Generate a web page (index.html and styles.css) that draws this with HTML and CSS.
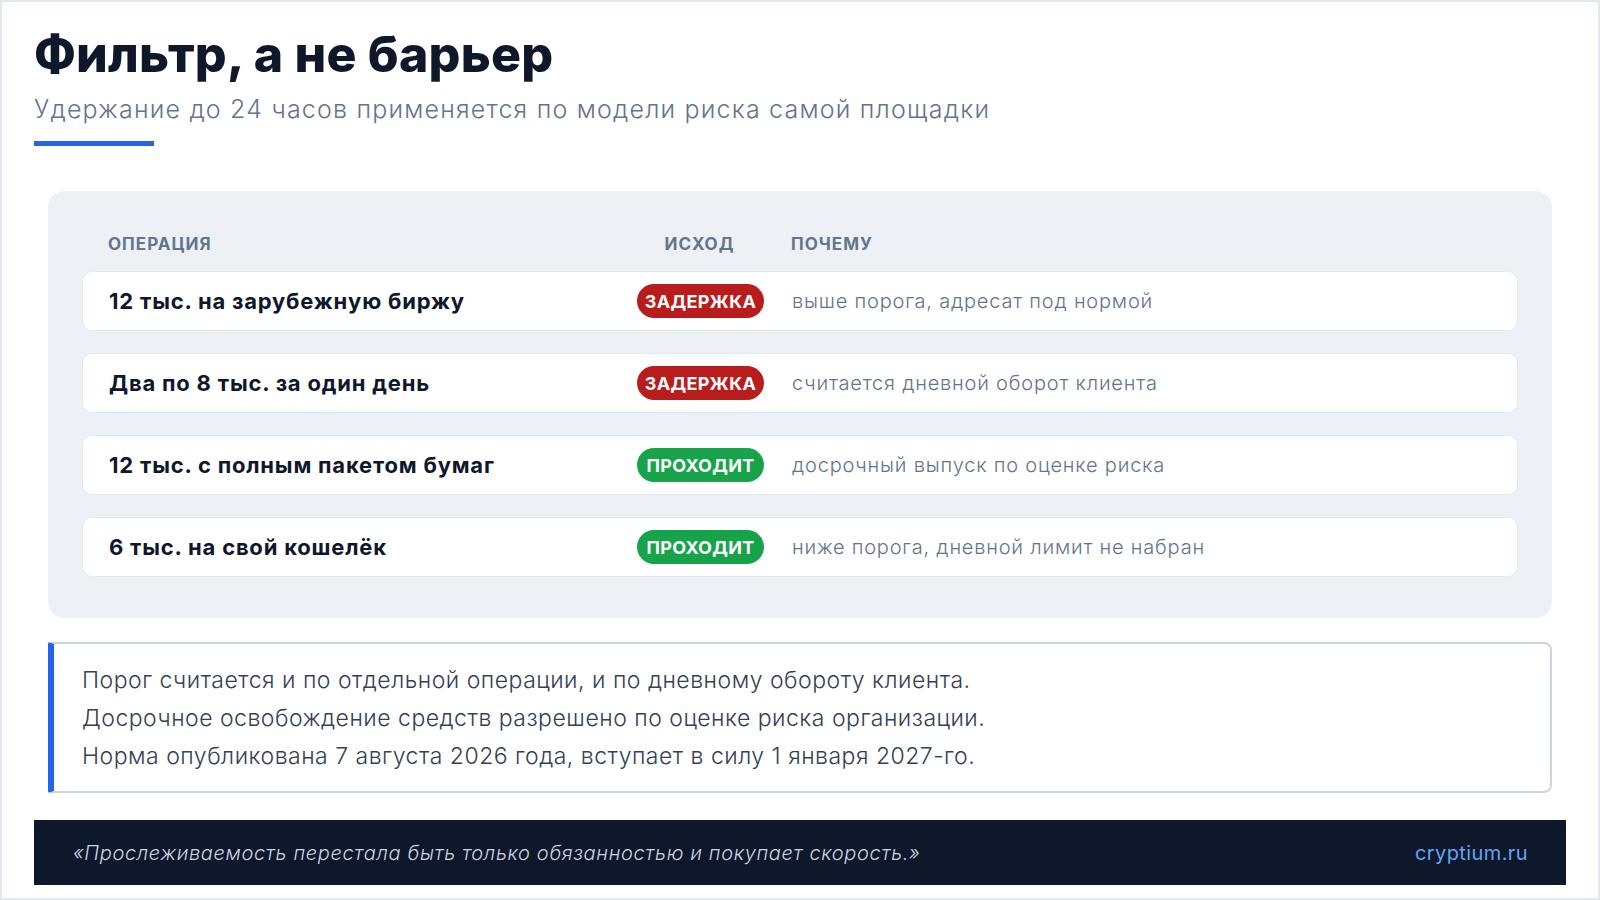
FILE: index.html
```html
<!DOCTYPE html>
<html lang="ru">
<head>
<meta charset="utf-8">
<title>Фильтр, а не барьер</title>
<link rel="stylesheet" href="styles.css">
</head>
<body>
<div class="page">
  <header class="head">
    <h1 class="title">Фильтр, а не барьер</h1>
    <p class="subtitle">Удержание до 24 часов применяется по модели риска самой площадки</p>
    <div class="accent"></div>
  </header>

  <section class="panel">
    <div class="grid thead">
      <div>Операция</div>
      <div class="c">Исход</div>
      <div>Почему</div>
    </div>
    <div class="grid row">
      <div class="op">12 тыс. на зарубежную биржу</div>
      <div class="c"><span class="badge hold">Задержка</span></div>
      <div class="why">выше порога, адресат под нормой</div>
    </div>
    <div class="grid row">
      <div class="op">Два по 8 тыс. за один день</div>
      <div class="c"><span class="badge hold">Задержка</span></div>
      <div class="why">считается дневной оборот клиента</div>
    </div>
    <div class="grid row">
      <div class="op">12 тыс. с полным пакетом бумаг</div>
      <div class="c"><span class="badge pass">Проходит</span></div>
      <div class="why">досрочный выпуск по оценке риска</div>
    </div>
    <div class="grid row">
      <div class="op">6 тыс. на свой кошелёк</div>
      <div class="c"><span class="badge pass">Проходит</span></div>
      <div class="why">ниже порога, дневной лимит не набран</div>
    </div>
  </section>

  <section class="note">
    <p>Порог считается и по отдельной операции, и по дневному обороту клиента.</p>
    <p>Досрочное освобождение средств разрешено по оценке риска организации.</p>
    <p>Норма опубликована 7 августа 2026 года, вступает в силу 1 января 2027-го.</p>
  </section>

  <footer class="foot">
    <span class="quote">«Прослеживаемость перестала быть только обязанностью и покупает скорость.»</span>
    <span class="site">cryptium.ru</span>
  </footer>
</div>
</body>
</html>
```

FILE: styles.css
```css
* { box-sizing: border-box; }
html, body { margin: 0; padding: 0; background: #ffffff; }
body {
  font-family: Inter, "Noto Sans", "Liberation Sans", sans-serif;
  color: #0f172a;
}
.page {
  width: 1600px;
  height: 900px;
  border: 2px solid #e2e8f0;
  padding: 22px 32px 0 32px;
  display: flex;
  flex-direction: column;
}
.head { display: flex; flex-direction: column; }
.title {
  margin: 0;
  font-size: 50px;
  line-height: 60px;
  font-weight: 800;
  color: #0f172a;
  letter-spacing: 0.2px;
}
.subtitle {
  margin: 9px 0 0 0;
  font-size: 25px;
  line-height: 32px;
  font-weight: 300;
  color: #64748b;
  letter-spacing: 1.2px;
}
.accent {
  width: 120px;
  height: 5px;
  background: #2563eb;
  margin-top: 16px;
}
.panel {
  margin: 45px 14px 0 14px;
  background: #edf1f6;
  border-radius: 16px;
  padding: 40px 34px 41px 34px;
  display: flex;
  flex-direction: column;
  gap: 22px;
}
.grid {
  display: grid;
  grid-template-columns: 500px 127px 1fr;
  column-gap: 28px;
  align-items: center;
  padding: 0 26px;
}
.c { text-align: center; }
.thead {
  height: 26px;
  margin-bottom: -8px;
  font-size: 17px;
  font-weight: 700;
  text-transform: uppercase;
  letter-spacing: 1px;
  color: #64748b;
}
.row {
  height: 60px;
  background: #ffffff;
  border: 1.5px solid #e2e8f0;
  border-radius: 10px;
}
.op {
  font-size: 22px;
  font-weight: 700;
  color: #0f172a;
  letter-spacing: 0.8px;
}
.badge {
  display: inline-flex;
  align-items: center;
  justify-content: center;
  width: 127px;
  height: 34px;
  border-radius: 17px;
  color: #ffffff;
  font-size: 18px;
  font-weight: 700;
  text-transform: uppercase;
  letter-spacing: 0.3px;
}
.hold { background: #b91c1c; }
.pass { background: #16a34a; }
.why {
  font-size: 20px;
  font-weight: 300;
  color: #64748b;
  letter-spacing: 0.8px;
}
.note {
  margin: 24px 14px 0 14px;
  border: 2px solid #cbd5e1;
  border-left: 6px solid #2563eb;
  border-radius: 2px 8px 8px 2px;
  padding: 17px 30px 16px 28px;
}
.note p {
  margin: 0;
  font-size: 23px;
  line-height: 38px;
  font-weight: 300;
  color: #334155;
  letter-spacing: 0.5px;
}
.foot {
  margin-top: 27px;
  height: 65px;
  background: #0f172a;
  display: flex;
  align-items: center;
  justify-content: space-between;
  padding: 0 38px 0 39px;
}
.quote {
  font-size: 20px;
  font-style: italic;
  font-weight: 300;
  color: #cbd5e1;
  letter-spacing: 0.65px;
}
.site {
  font-size: 20px;
  font-weight: 400;
  color: #60a5fa;
  letter-spacing: 0.4px;
}
```
